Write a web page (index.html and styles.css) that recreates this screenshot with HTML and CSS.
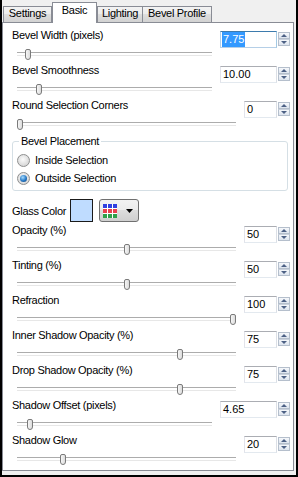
FILE: index.html
```html
<!DOCTYPE html>
<html lang="en">
<head>
  <meta charset="UTF-8" />
  <title>Glass Bevel - Basic</title>
  <link rel="stylesheet" href="styles.css">
</head>
<body>
  <div class="window">
    <div class="tabs">
      <div class="tab tab-settings">Settings</div>
      <div class="tab tab-basic active">Basic</div>
      <div class="tab tab-lighting">Lighting</div>
      <div class="tab tab-profile">Bevel Profile</div>
    </div>

    <div class="panel">
      <div class="row">
        <label>Bevel Width (pixels)</label>
        <div class="spin wide focus">
          <span class="field"><span class="sel">7.75</span></span>
          <span class="arrows"><i class="up"></i><i class="down"></i></span>
        </div>
        <div class="slider"><div class="thumb" style="--v:.042"></div></div>
      </div>

      <div class="row">
        <label>Bevel Smoothness</label>
        <div class="spin wide">
          <span class="field">10.00</span>
          <span class="arrows"><i class="up"></i><i class="down"></i></span>
        </div>
        <div class="slider"><div class="thumb" style="--v:.1"></div></div>
      </div>

      <div class="row">
        <label>Round Selection Corners</label>
        <div class="spin">
          <span class="field">0</span>
          <span class="arrows"><i class="up"></i><i class="down"></i></span>
        </div>
        <div class="slider"><div class="thumb" style="--v:0"></div></div>
      </div>

      <fieldset class="group">
        <legend>Bevel Placement</legend>
        <div class="radios">
          <div class="radio-row"><span class="radio"></span>Inside Selection</div>
          <div class="radio-row"><span class="radio checked"></span>Outside Selection</div>
        </div>
      </fieldset>

      <div class="color-row">
        <span class="color-label">Glass Color</span>
        <span class="swatch"></span>
        <span class="picker">
          <svg width="14" height="14" viewBox="0 0 14 14">
            <rect width="14" height="14" fill="#fff"/>
            <rect x="0" y="0" width="4" height="4" fill="#2f3fe0"/>
            <rect x="5" y="0" width="4" height="4" fill="#2f3fe0"/>
            <rect x="10" y="0" width="4" height="4" fill="#2f3fe0"/>
            <rect x="0" y="5" width="4" height="4" fill="#e8414f"/>
            <rect x="5" y="5" width="4" height="4" fill="#e8414f"/>
            <rect x="10" y="5" width="4" height="4" fill="#e8414f"/>
            <rect x="0" y="10" width="4" height="4" fill="#2ea04a"/>
            <rect x="5" y="10" width="4" height="4" fill="#2ea04a"/>
            <rect x="10" y="10" width="4" height="4" fill="#2ea04a"/>
          </svg>
          <svg class="caret" width="7" height="4" viewBox="0 0 7 4"><path d="M0 0H7L3.5 4Z" fill="#000"/></svg>
        </span>
      </div>

      <div class="row">
        <label>Opacity (%)</label>
        <div class="spin">
          <span class="field">50</span>
          <span class="arrows"><i class="up"></i><i class="down"></i></span>
        </div>
        <div class="slider"><div class="thumb" style="--v:.5"></div></div>
      </div>

      <div class="row">
        <label>Tinting (%)</label>
        <div class="spin">
          <span class="field">50</span>
          <span class="arrows"><i class="up"></i><i class="down"></i></span>
        </div>
        <div class="slider"><div class="thumb" style="--v:.5"></div></div>
      </div>

      <div class="row">
        <label>Refraction</label>
        <div class="spin">
          <span class="field">100</span>
          <span class="arrows"><i class="up"></i><i class="down"></i></span>
        </div>
        <div class="slider"><div class="thumb" style="--v:1"></div></div>
      </div>

      <div class="row">
        <label>Inner Shadow Opacity (%)</label>
        <div class="spin">
          <span class="field">75</span>
          <span class="arrows"><i class="up"></i><i class="down"></i></span>
        </div>
        <div class="slider"><div class="thumb" style="--v:.75"></div></div>
      </div>

      <div class="row">
        <label>Drop Shadow Opacity (%)</label>
        <div class="spin">
          <span class="field">75</span>
          <span class="arrows"><i class="up"></i><i class="down"></i></span>
        </div>
        <div class="slider"><div class="thumb" style="--v:.75"></div></div>
      </div>

      <div class="row">
        <label>Shadow Offset (pixels)</label>
        <div class="spin wide">
          <span class="field">4.65</span>
          <span class="arrows"><i class="up"></i><i class="down"></i></span>
        </div>
        <div class="slider"><div class="thumb" style="--v:.053"></div></div>
      </div>

      <div class="row">
        <label>Shadow Glow</label>
        <div class="spin">
          <span class="field">20</span>
          <span class="arrows"><i class="up"></i><i class="down"></i></span>
        </div>
        <div class="slider"><div class="thumb" style="--v:.2"></div></div>
      </div>
    </div>
  </div>
</body>
</html>
```

FILE: styles.css
```css
* {
  box-sizing: border-box;
}

body {
  margin: 0;
  padding: 0;
  background: #f0f0f0;
  font-family: 'Liberation Sans', Arial, sans-serif;
  font-size: 11px;
  color: #000;
}

.window {
  width: 298px;
  height: 477px;
  border: 2px solid #000;
  border-top: none;
  background: #f0f0f0;
  overflow: hidden;
}

/* tabs */
.tabs {
  display: flex;
  align-items: flex-end;
  height: 23px;
  padding-left: 1px;
}

.tab {
  height: 16px;
  margin-bottom: 1px;
  border: 1px solid #898c95;
  border-bottom: none;
  background: linear-gradient(#f3f3f3, #ebebeb 50%, #dedede 50%, #d2d2d2);
  line-height: 13px;
  text-align: center;
  letter-spacing: -0.3px;
  white-space: nowrap;
}

.tab + .tab {
  border-left: none;
}

.tab-settings { width: 49px; }
.tab-basic { width: 45px; }
.tab-lighting { width: 46px; }
.tab-profile { width: 69px; }

.tab.active {
  position: relative;
  z-index: 1;
  height: 21px;
  margin-bottom: 0;
  padding-top: 1px;
  background: #fff;
  border-left: 1px solid #898c95;
}

.tab.active + .tab {
  border-left: 1px solid #898c95;
}

.panel {
  margin: -1px 2px 0 0;
  border: 1px solid #898c95;
  background: #fff;
  padding: 6px 3px 1px 9px;
}

/* label + slider + spin rows */
.row {
  display: grid;
  grid-template-columns: 1fr auto;
  column-gap: 8px;
  height: 35px;
}

.row label {
  grid-column: 1;
  grid-row: 1;
  line-height: 13px;
  letter-spacing: -0.3px;
  white-space: nowrap;
}

.spin {
  grid-column: 2;
  grid-row: 1 / span 2;
  display: flex;
  align-items: flex-start;
  margin-top: 2px;
}

.field {
  width: 33px;
  height: 17px;
  border: 1px solid;
  border-color: #abadb3 #dbdfe6 #e3e9ef #e2e3ea;
  padding-left: 2px;
  line-height: 15px;
  font-size: 11px;
  background: #fff;
}

.spin.wide .field {
  width: 57px;
}

.spin.focus .field {
  border-color: #3d7bad #a4c9e3 #b5cfe7 #b5cfe7;
  padding-left: 1px;
}

.sel {
  display: inline-block;
  background: #3399ff;
  color: #fff;
  padding: 0 1px;
}

.arrows {
  display: flex;
  flex-direction: column;
  width: 12px;
  margin: 1px 0 0 1px;
}

.arrows i {
  display: flex;
  align-items: center;
  justify-content: center;
  height: 7px;
  border: 1px solid #b5bfcc;
  background: linear-gradient(#f6f8fb, #dde4ee);
}

.arrows i + i {
  border-top-color: #c9d1dc;
}

.arrows i::after {
  content: "";
  border-left: 3px solid transparent;
  border-right: 3px solid transparent;
}

.arrows .up::after {
  border-bottom: 3px solid #4d6185;
}

.arrows .down::after {
  border-top: 3px solid #4d6185;
}

.slider {
  grid-column: 1;
  grid-row: 2;
  position: relative;
  height: 12px;
  margin: 4px 0 0 5px;
}

.slider::before {
  content: "";
  display: block;
  margin-top: 3px;
  height: 2px;
  border-top: 1px solid #acacac;
  border-bottom: 1px solid #e7e7e7;
}

.thumb {
  position: absolute;
  top: 0;
  left: calc((100% - 6px) * var(--v));
  width: 6px;
  height: 11px;
  border: 1px solid #7a7a7a;
  border-radius: 2px 2px 3px 3px;
  background: linear-gradient(90deg, #f6f6f6, #dcdcdc);
}

/* group box */
.group {
  margin: 1px 2px 0 0;
  padding: 0 0 3px 4px;
  border: 1px solid #d5dfe5;
  border-radius: 3px;
}

.group legend {
  margin-left: 2px;
  padding: 0 2px;
  line-height: 13px;
  letter-spacing: -0.3px;
}

.radios {
  margin-top: 3px;
}

.radio-row {
  display: flex;
  align-items: center;
  height: 18px;
  letter-spacing: -0.3px;
}

.radio {
  display: flex;
  align-items: center;
  justify-content: center;
  width: 13px;
  height: 13px;
  margin-right: 5px;
  border: 1px solid #8e8f8f;
  border-radius: 50%;
  background: radial-gradient(circle at 45% 40%, #fbfbfb, #d9d9d9 70%, #c8c8c8);
}

.radio.checked::after {
  content: "";
  width: 7px;
  height: 7px;
  border-radius: 50%;
  background: radial-gradient(circle at 40% 35%, #a6dcff, #2577c4 55%, #103e72);
}

/* glass colour */
.color-row {
  display: flex;
  align-items: center;
  height: 23px;
  margin: 8px 0 2px;
}

.color-label {
  width: 58px;
  letter-spacing: -0.3px;
}

.swatch {
  width: 23px;
  height: 23px;
  border: 1px solid #1a1a1a;
  background: #bfdcff;
}

.picker {
  display: flex;
  align-items: center;
  width: 40px;
  height: 23px;
  margin-left: 6px;
  padding-left: 3px;
  border: 1px solid #707070;
  border-radius: 3px;
  background: linear-gradient(#f2f2f2, #ebebeb 50%, #dddddd 50%, #cfcfcf);
}

.caret {
  margin-left: 9px;
}
```
